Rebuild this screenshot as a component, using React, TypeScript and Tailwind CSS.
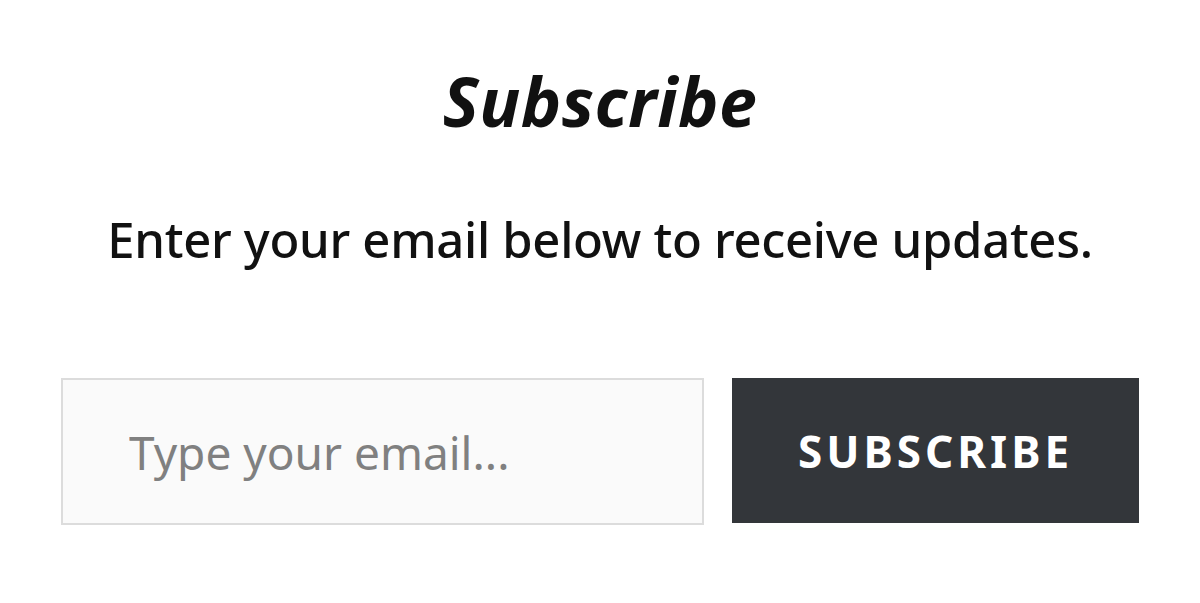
export default function App() {
  return (
    <div className="w-[1200px] h-[603px] bg-white font-['Noto_Sans',sans-serif] text-[#111]">
      <div className="flex flex-col items-center pt-[61px]">
        <h2 className="text-[68px] leading-[80px] font-bold italic tracking-[0.5px]">Subscribe</h2>
        <p className="mt-[68px] text-[49px] leading-[60px] font-medium tracking-[-0.3px]">Enter your email below to receive updates.</p>
      </div>
      <form className="flex gap-[28px] px-[61px] mt-[109px]" onSubmit={(e) => e.preventDefault()}>
        <input
          type="email"
          placeholder="Type your email..."
          className="w-[643px] h-[147px] border-2 border-[#dcdcdc] bg-[#fafafa] pl-[66px] text-[46px] text-[#333] placeholder:text-[#808080] outline-none"
        />
        <button className="w-[408px] h-[145px] bg-[#33363a] text-white text-[44px] font-bold tracking-[4px]">
          SUBSCRIBE
        </button>
      </form>
    </div>
  );
}
